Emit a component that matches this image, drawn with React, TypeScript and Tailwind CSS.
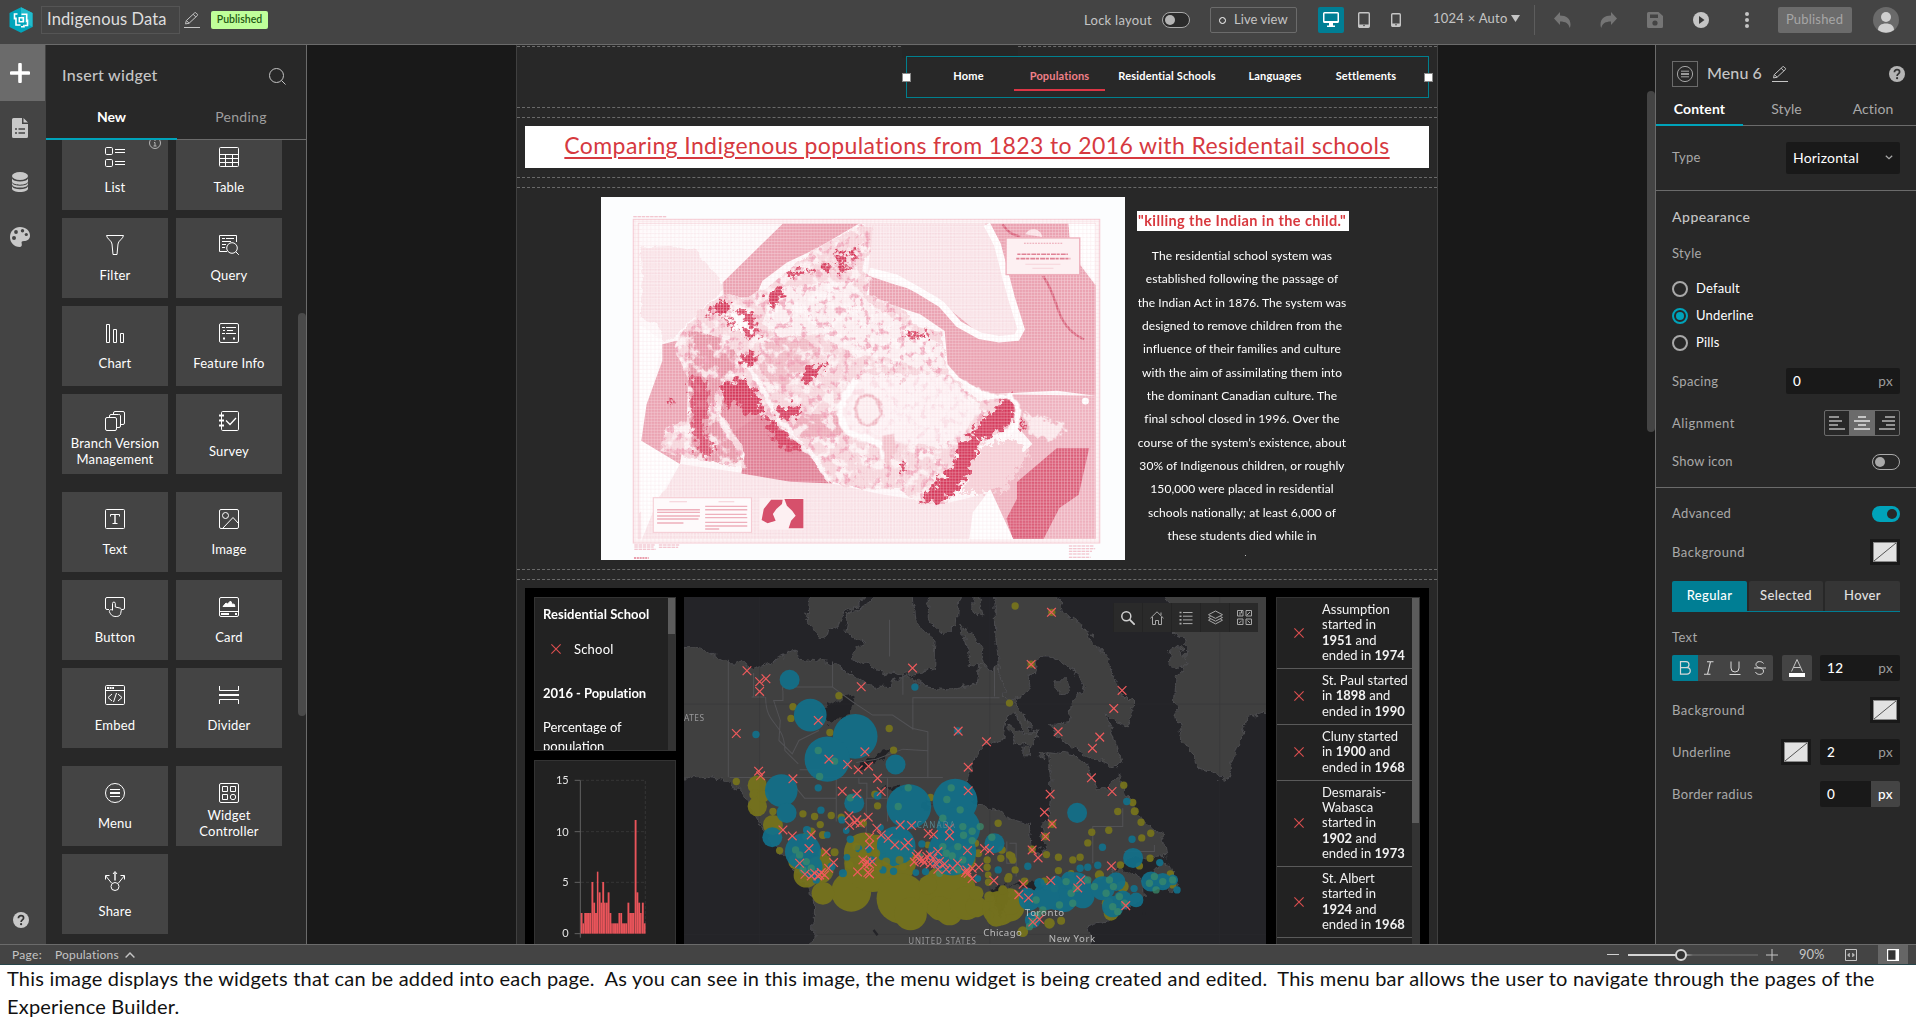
import React from 'react';
import type { ReactNode } from 'react';

/* ---------- shared icons ---------- */

const Ico = ({ children, s = 20, vb = 20, className = '' }: { children: ReactNode; s?: number; vb?: number; className?: string }) => (
  <svg width={s} height={s} viewBox={`0 0 ${vb} ${vb}`} fill="none" stroke="currentColor" strokeWidth={1} className={`shrink-0 ${className}`}>
    {children}
  </svg>
);

const Pencil = () => (
  <Ico s={16} vb={16}>
    <path d="M1.5 11.8 2.3 8.6 10.6 0.9a1 1 0 0 1 1.4 0l1.3 1.3a1 1 0 0 1 0 1.4L5 11.3l-3.5.6ZM9.2 2.3l2.6 2.6M2.5 8.6l2.4 2.5" />
    <path d="M0 15.5h16" />
  </Ico>
);

const Help = () => (
  <svg width="16" height="16" viewBox="0 0 16 16" className="shrink-0">
    <circle cx="8" cy="8" r="8" fill="currentColor" />
    <path d="M5.4 6.2c0-1.6 1.1-2.5 2.6-2.5s2.6.9 2.6 2.3c0 1.9-2.5 2-2.5 4" fill="none" stroke="#333" strokeWidth="1.7" />
    <circle cx="8.1" cy="12.2" r="1.1" fill="#333" />
  </svg>
);

const MenuIcon = ({ s = 20 }: { s?: number }) => (
  <Ico s={s}>
    <circle cx="10" cy="10" r="9.5" />
    <path d="M5 6.5h10M5 9.5h10M5 10.5h10M5 13.5h10" />
  </Ico>
);

const icons: Record<string, ReactNode> = {
  List: <Ico><rect x=".5" y=".5" width="7" height="7" rx="1.2" /><rect x=".5" y="12.5" width="7" height="7" rx="1.2" /><path d="M10 2.5h10M10 5.5h10M10 14.5h10M10 17.5h10" /></Ico>,
  Table: <Ico><rect x=".5" y=".5" width="19" height="19" rx="1" /><path d="M.5 7.5h19M.5 11.5h19M.5 15.5h19M6.5 7.5v12M13.5 7.5v12" /></Ico>,
  Filter: <Ico><path d="M1.5.5h17c-.3 3.200-5.500 5.500-5.500 8.500l-1 10.500H8L7 9C7 6 1.800 3.700 1.500.5Z" strokeLinejoin="round" /></Ico>,
  Query: <Ico><path d="M8 16.500H.5V.5h17V7M3 3.500h3M7 3.500h8M3 6.500h9M3 9.500h4M3 12.500h3" /><circle cx="13" cy="13" r="5.300" /><path d="m16.800 16.800 3 3" /></Ico>,
  Chart: <Ico><path d="M1.500 1.500h3v18h-3ZM8.500 6.500h3v13h-3ZM15.500 10.500h3v9h-3Z" /></Ico>,
  'Feature Info': <Ico><rect x=".5" y=".5" width="19" height="19" rx="1.500" /><path d="M3 4.500h3M7 4.500h10M4 7.500h2M8 7.500h6M3 10.500h3M7 10.500h10M4 15.500h2M5 14v3M14 15.500h2M15 14v3" /></Ico>,
  'Branch Version Management': <Ico><rect x=".5" y="6.500" width="11" height="13" rx="1.500" /><path d="M4.500 6V5A1.500 1.500 0 0 1 6 3.500h7.500A1.500 1.500 0 0 1 15.500 5v10a1.500 1.500 0 0 1-1.500 1.500h-2M8.500 3V2A1.500 1.500 0 0 1 10 .5h8A1.500 1.500 0 0 1 19.500 2v10a1.500 1.500 0 0 1-1.500 1.500h-2" /></Ico>,
  Survey: <Ico><rect x="2.500" y=".5" width="17" height="19" rx="1.200" /><path d="M0 4.500h5M0 9.500h5M0 14.500h5" strokeWidth="2" /><path d="m7 9.500 4 4 6-6.500" strokeWidth="1.300" /></Ico>,
  Text: <Ico><rect x=".5" y=".5" width="19" height="19" rx="1" /><path d="M5.500 7.500v-2h9v2M7.500 14.500h5" /><path d="M10 5.500v9" strokeWidth="2" opacity=".7" /></Ico>,
  Image: <Ico><rect x=".5" y=".5" width="19" height="19" rx="1.500" /><circle cx="6.500" cy="6.500" r="3" /><path d="M3.500 19.500 14 8.500l5.500 6" /></Ico>,
  Button: <Ico><path d="M4 12.500H2A1.500 1.500 0 0 1 .5 11V2A1.500 1.500 0 0 1 2 .5h16A1.500 1.500 0 0 1 19.500 2v9a1.500 1.500 0 0 1-1.500 1.500h-1.500" /><path d="M7.500 13V6.500a1.400 1.400 0 0 1 2.800 0V10l4.500 1c1.200.3 1.700 1 1.500 2.200l-.6 3.300c-.4 2-2 3-4.500 3-3.500 0-5-1-6.700-4.500C3.800 13.300 6 11.500 7.500 13.500" /></Ico>,
  Card: <Ico><rect x=".5" y=".5" width="19" height="19" rx="1.500" /><path d="M0 14.500h20" /><path d="m4 9.500 3-3.500 1.500 1L11.500 4l2 3.500L15 7l1 2.500Z" fill="currentColor" /><path d="M2 17h8" strokeWidth="2" /><path d="M16 17h2" strokeWidth="2" /></Ico>,
  Embed: <Ico><rect x=".5" y=".5" width="19" height="19" rx="1.200" /><path d="M.5 5.500h19" /><path d="M2 3h7" strokeWidth="2" strokeDasharray="2 .6" /><path d="m7 9-4 3.500L7 16M13 9l4 3.500-4 3.500M11.500 8 8.500 17" /></Ico>,
  Divider: <Ico><path d="M.5 1v4.500h19V1M.5 19v-4.500h19V19" /><path d="M0 10h20" strokeWidth="2" /></Ico>,
  Menu: <MenuIcon />,
  'Widget Controller': <Ico><rect x=".5" y=".5" width="19" height="19" rx="1.500" /><path d="M3.500 3.500h5v5h-5ZM11.500 3.500h5v5h-5ZM3.500 11.500h5v5h-5Z" /><circle cx="14" cy="14" r="2.700" /></Ico>,
  Share: <Ico><circle cx="10" cy="15.500" r="4" /><path d="M8 3l2-2.500L12 3M6.500 12 .8 5M.5 8.500v-4h4M13.500 12l5.700-7M19.500 8.500v-4h-4" /><path d="M10 9.500v-8" strokeWidth="2" opacity=".7" /></Ico>,
};

const Tile = ({ name }: { name: string }) => (
  <div className="flex h-20 flex-col items-center bg-[#444] pt-[17px] text-white">
    {icons[name]}
    <div className="mt-1 flex h-8 w-[93px] items-center justify-center text-center text-[13px] leading-4 tracking-[0.2px]">
      <span>{name}</span>
    </div>
  </div>
);

/* ---------- top bar ---------- */

const Header = () => (
  <header className="flex h-[45px] shrink-0 items-start border-b border-[#6b6b6b] bg-[#444] text-[#c5c5c5]">
    <svg width="24" height="26" viewBox="0 0 24 26" className="ml-[9px] mt-[7px] shrink-0">
      <path d="M12 .3 23.500 6v14L12 25.700.5 20V6Z" fill="#00a5bb" />
      <path d="M12 .3 23.500 6v14L12 13Z" fill="#22bccd" />
      <path d="M8.500 7H5.500v5.500M7 10.500v7.500h4.500M12 19.800h3v-2M12.500 7.200h5.200v7.800M18.500 12.500v6h-2.500M10.300 10.700h4v4h-4Z" fill="none" stroke="#fff" strokeWidth="1.600" />
    </svg>
    <div className="ml-2 mt-1.5 flex h-7 w-[139px] items-center border border-[#555] pl-[5px] pb-px text-[16.500px] tracking-[0.130px] text-[#dedede]">Indigenous Data</div>
    <div className="ml-1 mt-3"><Pencil /></div>
    <div className="ml-[11px] mt-[11px] flex h-[18px] w-[57px] items-center justify-center rounded-[2px] bg-[#bfff9a] pb-px text-[10.500px] font-semibold text-[#1f5a12]">Published</div>

    <div className="ml-[816px] mt-3 h-4 text-[13px] leading-4 tracking-[0.280px]">Lock layout</div>
    <div className="ml-[10px] mt-3 flex h-4 w-7 items-center rounded-full border border-[#a9a9a9] bg-[#2b2b2b] pl-[2px]"><div className="size-[10px] rounded-full bg-[#b5b5b5]" /></div>
    <div className="ml-5 mt-[7px] flex h-[26px] w-[87px] items-center rounded-[2px] border border-[#6b6b6b] pl-[8px] text-[13px] tracking-[0.080px]">
      <div className="mr-2 size-[7px] rounded-full border border-white" />Live view
    </div>
    <div className="ml-[21px] mt-[7px] flex size-[26px] items-center justify-center rounded-[2px] bg-[#007e94] text-white">
      <Ico s={16} vb={16}><rect x=".75" y=".75" width="14.500" height="9.500" rx=".8" strokeWidth="1.500" /><path d="M1 9h14v2H1ZM6 11h4v2.500h2V15H4v-1.500h2Z" fill="currentColor" stroke="none" /></Ico>
    </div>
    <svg width="14" height="16" viewBox="0 0 14 16" className="ml-[13px] mt-3 shrink-0"><rect x="1.700" y=".7" width="10.600" height="14.600" rx="1" fill="none" stroke="#c5c5c5" strokeWidth="1.400" /><path d="M2 12.500h10v2.500H2Z" fill="#c5c5c5" /><circle cx="7" cy="13.500" r=".8" fill="#444" /></svg>
    <svg width="10" height="14" viewBox="0 0 10 14" className="ml-5 mt-[13px] shrink-0"><rect x=".7" y=".7" width="8.600" height="12.600" rx="1" fill="none" stroke="#c5c5c5" strokeWidth="1.400" /><path d="M1 10.500h8V13H1Z" fill="#c5c5c5" /><circle cx="5" cy="11.700" r=".8" fill="#444" /></svg>
    <div className="ml-8 mt-[10px] h-4 text-[13px] leading-4 tracking-[0.250px]">1024 × Auto</div>
    <svg width="9" height="7" viewBox="0 0 9 7" className="ml-[3px] mt-[15px] shrink-0"><path d="M0 0h9L4.500 7Z" fill="#c5c5c5" /></svg>
    <div className="ml-[14px] mt-[5px] h-[30px] w-px bg-[#5d5d5d]" />
    <svg width="17" height="16" viewBox="0 0 17 16" className="ml-[19px] mt-3 shrink-0"><path d="M6 0v3.500c6 0 10.500 3 10.500 9 0 1.500-.3 2.500-.8 3.500-1-4.500-4-6.500-9.700-6.500V13L0 6.500Z" fill="#757575" /></svg>
    <svg width="17" height="16" viewBox="0 0 17 16" className="ml-[29px] mt-3 shrink-0"><path d="M11 0v3.500C5 3.500.5 6.500.5 12.500c0 1.500.3 2.500.8 3.500 1-4.500 4-6.500 9.700-6.500V13l6-6.500Z" fill="#757575" /></svg>
    <svg width="16" height="16" viewBox="0 0 16 16" className="ml-[30px] mt-3 shrink-0"><path d="M1.500 0h10L16 4v10.500a1.500 1.500 0 0 1-1.500 1.500h-13A1.500 1.500 0 0 1 0 14.500v-13A1.500 1.500 0 0 1 1.500 0ZM3 2.500v3.500h8V2.500Z" fill="#757575" fillRule="evenodd" /><circle cx="8" cy="11" r="2.600" fill="#444" /></svg>
    <svg width="16" height="16" viewBox="0 0 16 16" className="ml-[30px] mt-3 shrink-0"><circle cx="8" cy="8" r="8" fill="#c5c5c5" /><path d="m6 4 5.500 4L6 12Z" fill="#3a3a3a" /></svg>
    <svg width="4" height="16" viewBox="0 0 4 16" className="ml-[36px] mt-3 shrink-0" fill="#c5c5c5"><circle cx="2" cy="2" r="2" /><circle cx="2" cy="8" r="2" /><circle cx="2" cy="14" r="2" /></svg>
    <div className="ml-[29px] mt-[7px] flex h-[26px] w-[74px] items-center justify-center rounded-[2px] bg-[#6b6b6b] text-[13px] tracking-[0.200px] text-[#a6a6a6]">Published</div>
    <svg width="26" height="26" viewBox="0 0 26 26" className="ml-[21px] mt-[7px] shrink-0"><circle cx="13" cy="13" r="13" fill="#6a6a6a" /><circle cx="13" cy="10" r="5" fill="#cfcfcf" /><path d="M5 23c0-4.500 3.500-6.500 8-6.500s8 2 8 6.500a13 13 0 0 1-16 0Z" fill="#cfcfcf" /></svg>
  </header>
);

/* ---------- left rail and widget list ---------- */

const Rail = () => (
  <nav className="flex w-[46px] shrink-0 flex-col items-start bg-[#444] text-[#c8c8c8]">
    <div className="flex h-14 w-[45px] items-center justify-center bg-[#6b6b6b] pr-[5px]">
      <svg width="20" height="20" viewBox="0 0 20 20"><path d="M10 1.500v17M1.500 10h17" stroke="#fff" strokeWidth="3.600" strokeLinecap="round" /></svg>
    </div>
    <svg width="16" height="20" viewBox="0 0 16 20" className="ml-3 mt-[17px]"><path d="M1.500 0H10v6h6v12.500a1.500 1.500 0 0 1-1.500 1.500h-13A1.500 1.500 0 0 1 0 18.500v-17A1.500 1.500 0 0 1 1.500 0ZM11.500 0 16 4.500h-4.500Z" fill="currentColor" /><path d="M3 11h2M6.500 11H13M3 15h2M6.500 15H13" stroke="#444" strokeWidth="1.500" /></svg>
    <svg width="16" height="20" viewBox="0 0 16 20" className="ml-3 mt-[34px]" fill="currentColor"><ellipse cx="8" cy="4" rx="8" ry="4" /><path d="M0 6.500c1 2.200 4 3 8 3s7-.8 8-3v2.800c0 2-3.500 3.400-8 3.400S0 11.300 0 9.300ZM0 10.800c1 2.200 4 3 8 3s7-.8 8-3v1.400c0 2-3.500 3.400-8 3.400s-8-1.400-8-3.400ZM0 14.200c1 2.200 4 3 8 3s7-.8 8-3v2.300c0 2.100-3.500 3.500-8 3.500s-8-1.400-8-3.500Z" /></svg>
    <svg width="20" height="20" viewBox="0 0 20 20" className="ml-[10px] mt-[35px]"><path d="M10 0c6 0 10 3.800 10 8.500 0 4-3 5.500-6 5.500-2 0-2.800.8-2.300 2.500.5 2-.2 3.500-2 3.500C4 20 0 15.600 0 10S4.400 0 10 0Z" fill="currentColor" /><g fill="#444"><circle cx="6" cy="5" r="1.900" /><circle cx="12.500" cy="3.700" r="1.700" /><circle cx="16.300" cy="7.500" r="1.600" /><circle cx="4" cy="11" r="2" /></g></svg>
    <div className="ml-[13px] mt-auto mb-4"><Help /></div>
  </nav>
);

const WidgetPanel = () => (
  <aside className="relative flex w-[261px] shrink-0 flex-col overflow-hidden border-r border-[#6b6b6b] bg-[#282828]">
    <div className="flex h-[62px] shrink-0 items-center justify-between pl-4 pr-[20px] text-[#c5c5c5]">
      <span className="pb-[2px] text-[16px] font-medium tracking-[0.270px]">Insert widget</span>
      <Ico s={17} vb={17}><circle cx="7.500" cy="7.500" r="7" /><path d="m12.500 12.500 4 4" /></Ico>
    </div>
    <div className="flex h-[33px] shrink-0 text-center text-[14px] leading-5">
      <div className="w-[131px] border-b-2 border-[#00a3ba] font-bold text-white">New</div>
      <div className="flex-1 border-b border-[#6b6b6b] pr-px tracking-[0.300px] text-[#9e9e9e]">Pending</div>
    </div>
    <div className="min-h-0 flex-1 overflow-hidden px-4">
      <div className="-mt-[10px] grid grid-cols-[106px_106px] gap-2">
        <div className="relative"><Tile name="List" /><span className="absolute right-[7px] top-[7px] text-[#b5b5b5]"><Ico s={12} vb={12}><circle cx="6" cy="6" r="5.500" /><path d="M6 2.500v1.500M5 5.500h1v3.500M4.500 9h3" /></Ico></span></div>
        <Tile name="Table" /><Tile name="Filter" /><Tile name="Query" />
        <Tile name="Chart" /><Tile name="Feature Info" />
        <Tile name="Branch Version Management" /><Tile name="Survey" />
      </div>
      <div className="mt-[18px] grid grid-cols-[106px_106px] gap-2">
        <Tile name="Text" /><Tile name="Image" /><Tile name="Button" /><Tile name="Card" /><Tile name="Embed" /><Tile name="Divider" />
      </div>
      <div className="mt-[18px] grid grid-cols-[106px_106px] gap-2">
        <Tile name="Menu" /><Tile name="Widget Controller" /><Tile name="Share" />
      </div>
    </div>
    <div className="absolute right-0 top-[268px] h-[403px] w-2 rounded-full bg-[#4a4a4a]" />
  </aside>
);

/* ---------- historic geological map ---------- */

const landBody = 'M250 470 310 390 380 340 440 350 505 320 560 270 650 200 770 130 805 140 800 210 770 260 800 290 790 340 880 380 940 440 1000 450 1015 560 1060 620 1110 660 1200 645 1220 690 1190 740 1110 790 1080 870 1010 970 940 970 880 925 760 922 690 905 660 880 610 790 540 740 480 700 450 650 385 600 370 700 430 790 440 860 380 850 280 830 200 810 215 740 275 720 280 600 240 500Z';

const GeoMap = () => (
  <svg width="524" height="363" viewBox="30 48 1494 1090" preserveAspectRatio="none" className="block">
    <defs>
      <pattern id="mesh" width="8.600" height="9" patternUnits="userSpaceOnUse"><path d="M0 1h8.600M1 0v9" stroke="#fff" strokeWidth="1.500" opacity=".5" /></pattern>
      <pattern id="paleMesh" width="11.400" height="12" patternUnits="userSpaceOnUse"><path d="M0 1h11.400M1 0v12" stroke="#e8a5b4" strokeWidth="1.500" opacity=".3" /></pattern>
      <filter id="rough" x="-5%" y="-5%" width="110%" height="110%"><feTurbulence type="fractalNoise" baseFrequency=".045" numOctaves="3" seed="4" /><feDisplacementMap in="SourceGraphic" scale="18" xChannelSelector="R" yChannelSelector="G" /></filter>
      <filter id="rough2" x="-20%" y="-20%" width="140%" height="140%"><feTurbulence type="fractalNoise" baseFrequency=".06" numOctaves="4" seed="9" /><feDisplacementMap in="SourceGraphic" scale="50" xChannelSelector="R" yChannelSelector="G" /></filter>
      <filter id="speckDark" x="0" y="0" width="100%" height="100%"><feTurbulence type="fractalNoise" baseFrequency=".05 .045" numOctaves="5" seed="12" /><feColorMatrix values="0 0 0 0 .85  0 0 0 0 .3  0 0 0 0 .42  6 0 0 0 -3.300" /><feComposite in2="SourceGraphic" operator="in" /></filter>
      <filter id="speckWhite" x="0" y="0" width="100%" height="100%"><feTurbulence type="fractalNoise" baseFrequency=".03" numOctaves="5" seed="31" /><feColorMatrix values="0 0 0 0 1  0 0 0 0 .97  0 0 0 0 .97  0 6 0 0 -3" /><feComposite in2="SourceGraphic" operator="in" /></filter>
    </defs>
    <rect x="30" y="48" width="1494" height="1090" fill="#fcfdfe" />
    <rect x="122" y="115" width="1330" height="972" fill="#fdf5f6" stroke="#f5cbd3" strokeWidth="3" />
    <rect x="136" y="128" width="1304" height="946" fill="#fefafb" stroke="#f7d5db" strokeWidth="2" />
    {/* pale land of Alaska, Greenland and the United States */}
    <g fill="#fae6ea">
      <path d="M140 200 230 195 300 210 350 270 385 320 310 390 240 470 210 480 190 430 140 410 150 290Z" filter="url(#rough)" />
      <path d="M780 128H1125L1160 218 1175 298 1200 353 1230 443 1210 478 1140 470 1050 420 990 350 910 305 850 285 790 275 800 180Z" />
      <path d="M255 850 455 880 695 910 825 940 1005 970 1165 930 1205 1075H136V1000L216 925Z" />
    </g>
    <path d="m140 430 65 50-60 300 110 70-60 100-50 130Z" fill="#fff" />
    {/* seas */}
    <g fill="#eba3b2">
      <path d="M548 128H765L650 200 560 245 490 300 470 350 380 350 377 305Z" />
      <path d="M1125 128H1363L1367 188 1397 253 1440 313V645L1330 630 1130 640 1050 590 1018 550 1010 450 940 400 795 350V285L865 310 945 335 1035 395 1105 455 1165 475 1225 470 1230 443 1200 333 1175 218Z" />
      <path d="M1140 640 1440 645V1074H1205L1135 920 1200 850 1260 790Z" fill="#efb2bf" />
      <path d="M255 850 145 780 160 670 205 540 205 490 245 480 280 550 275 720Z" />
      <path d="M370 690 480 700 540 740 610 790 660 880 690 908 570 903 430 878 440 820 400 750Z" fill="#e07d93" />
      <path d="M360 600 450 640 485 700 400 760 365 690Z" fill="#e58b9e" />
    </g>
    <path d="M795 270 870 290 930 325 1000 370 1050 430 1110 465 1165 475 1215 470 1228 445 1200 350 1185 290 1160 190 1130 130" fill="none" stroke="#fff" strokeWidth="20" />
    <path d="M1330 802h92l-30 140-55 40-45 92h-88l-18-60 30-60 0-50Z" fill="#db5c77" />
    <path d={landBody} fill="#f7d6dc" filter="url(#rough)" />
    <g filter="url(#rough)">
      <path d="M520 320 740 300 800 370 910 440 1000 490 1010 560 950 570 850 530 740 520 660 460 540 470 490 430Z" fill="#fcf0f2" />
      <path d="M760 580H1010L1110 670 1080 740 1000 800 850 780 740 720Z" fill="#fdf2f4" />
      <path d="M280 450 370 470 425 530 390 590 350 650 370 740 440 840 380 850 290 825 280 600Z" fill="#e693a4" />
      <path d="M500 480 590 460 650 500 610 590 520 620 480 560Z" fill="#f0b8c3" />
      <path d="M570 760 600 700 700 700 720 750 690 790Z" fill="#eda9b7" />
    </g>
    <path d={landBody} filter="url(#speckWhite)" opacity=".8" />
    <path d={landBody} filter="url(#speckDark)" opacity=".75" />
    {/* dense geological units */}
    <g fill="#d5395a" filter="url(#rough2)">
      <path d="M375 610 435 590 475 640 490 690 450 710 420 660 385 690Z" />
      <path d="M495 700 550 750 610 800 560 810 520 770Z" />
      <path d="M520 680 595 675 600 700 560 718 525 705Z" />
      <path d="M285 590 335 600 340 680 320 740 350 790 340 830 305 810 290 740Z" opacity=".8" />
      <path d="M1195 640 1218 690 1180 745 1110 780 1085 870 1045 930 990 970 940 965 985 905 1035 855 1050 800 1100 740Z" />
      <path d="M600 610 612 555 675 550 660 570 625 605Z" />
      <path d="M370 400 410 440 450 470 485 460 460 400 420 385 400 420Z" opacity=".9" />
      <path d="M500 350 535 318 555 345 515 380Z" />
      <path d="M355 375 385 355 400 385 330 405ZM430 520 475 512 472 548 428 550Z" />
      <path d="M695 215 715 205 730 245 715 255ZM735 210 755 200 765 235 748 245ZM660 240 685 252 678 280 660 262ZM555 285 595 265 610 275 565 292ZM610 262 632 258 630 285ZM700 250 745 258 735 272 700 270Z" />
      <path d="M875 855 898 848 892 872ZM222 658 240 662 228 680ZM890 450 930 462 970 455 960 470 900 468ZM880 590 905 595 890 608ZM1215 710 1228 705 1232 745 1222 742Z" />
    </g>
    <path d="M450 560 500 640 520 690 590 780 640 830 680 900" stroke="#fff" strokeWidth="13" fill="none" opacity=".85" filter="url(#rough)" />
    <path d="M385 400 430 395 445 430 480 440 440 450 425 465 410 430Z" fill="#fff" filter="url(#rough2)" />
    {/* Hudson Bay */}
    <g filter="url(#rough)">
      <path d="M780 590c-60 50-85 130-60 155 40 30 100 25 130 45h60l150-20 50-80-70-80-60-25Z" fill="#fdf3f5" opacity=".75" />
      <path d="M760 595c-60 70-60 130-20 160 40 26 80 20 95 45l0 40" fill="none" stroke="#fff" strokeWidth="20" />
      <ellipse cx="792" cy="688" rx="36" ry="44" fill="#fdf0f2" stroke="#f0b8c3" strokeWidth="10" />
      <path d="M832 765 865 760 872 810 845 860 835 820Z" fill="#f3c2cb" />
    </g>
    <path d="m1020 575 60 40 60 32 60 0 20 30-5 60-70 60" fill="none" stroke="#fff" strokeWidth="13" filter="url(#rough)" />
    <path d="M1240 690 1355 738 1320 778 1250 758Z" fill="#fbe9ec" filter="url(#rough2)" />
    <path d="M1110 800 1200 770 1250 820 1180 930 1060 940 1080 870Z" fill="#f6cfd6" filter="url(#rough2)" />
    <path d="m1140 925 65 150h-125l10-80Z" fill="#fff" />
    <path d="M1290 285c30 40 35 90 55 130 15 30 40 50 62 60M1175 130c20 30 30 30 50 37" fill="none" stroke="#d8627b" strokeWidth="7" />
    <circle cx="1411" cy="661" r="10" fill="#fff" />
    <path d="M1240 160a25 25 0 0 1 48 8Z" fill="#fbe3e7" />
    <path d="M1363 128h77v180l-30-45-40-70Z" fill="#fff" opacity=".9" />
    <rect x="122" y="115" width="1330" height="972" fill="url(#paleMesh)" />
    <rect x="146" y="128" width="1294" height="946" fill="url(#mesh)" />
    {/* title block, notes and inset */}
    <rect x="1185" y="171" width="210" height="110" fill="#fdf0f2" stroke="#eeb1bd" strokeWidth="4" />
    <path d="M1236 187h110" stroke="#eaa2b1" strokeWidth="3" strokeDasharray="5 3" />
    <path d="M1217 220h144M1214 233h154" stroke="#e08295" strokeWidth="5" strokeDasharray="9 3 14 2" />
    <path d="M1240 250h100M1260 262h60" stroke="#f4c4cd" strokeWidth="2" />
    <rect x="179" y="951" width="280" height="104" fill="#fefafb" stroke="#f5cbd3" strokeWidth="3" />
    <g stroke="#eeb0bc" strokeWidth="4"><path d="M190 987h122M190 995h122M190 1006h122M190 1015h118M190 1027h75M327 977h120M327 987h120M327 1001h118M327 1011h120M327 1025h120M327 1036h120M327 1045h40" /><path d="M225 963h50M365 963h45" opacity=".6" strokeWidth="3" /></g>
    <rect x="482" y="952" width="126" height="95" fill="#fdf0f2" />
    <path d="M488 1018 494 985 515 957H548L546 970 530 985 520 1000 528 1020 505 1028ZM553 955H607V1043H565L572 1020 585 1005 575 990 560 975Z" fill="#d6506b" />
    <path d="M122 107h94M125 1093h60M125 1099h55M125 1106h62M195 1093h60M195 1100h55M1364 1096h70M1364 1104h75M1364 1112h66M1364 1120h60M1364 1130h62" stroke="#efb4c0" strokeWidth="3" strokeDasharray="10 2" />
    <path d="M124 1132h42" stroke="#ea9fae" strokeWidth="6" strokeDasharray="6 2" />
  </svg>
);

/* ---------- population map ---------- */

const blue = [[840,360,30],[902,466,49],[1037,530,67],[953,598,68],[1158,614,30],[815,692,49],[831,759,30],[788,832,30],[1198,740,67],[1337,724,67],[1347,805,65],[1328,875,72],[1034,730,30],[1160,858,58],[880,875,54],[905,920,34],[1455,850,30],[1703,759,30],[1871,894,30],[1216,382,11],[739,524,11],[926,684,11],[934,751,11],[953,825,10],[1345,513,11],[1104,708,12],[1237,852,11],[1000,940,12],[1022,838,11],[1010,812,10],[1047,866,11],[1012,892,10],[1076,868,11],[1086,900,11],[1118,890,11],[1152,908,11],[1152,934,11],[1190,880,11],[1120,930,11],[1248,935,11],[1466,930,11],[1405,956,10],[920,960,11],[966,920,12],[1219,938,10],[892,810,12],[997,780,11],[1555,919,11],[1712,925,11],[1735,922,11],[1765,916,11],[1779,862,11],[1868,838,11],[1852,725,11],[1951,908,11],[2003,990,11],[1874,986,11],[1925,965,30],[1960,965,26],[1680,960,25],[1700,985,48],[1640,1010,40],[1665,1020,36],[1720,1010,35],[1780,985,36],[1820,965,28],[1810,1040,32],[1840,1020,28],[1880,1020,22],[1610,1010,40],[1560,1020,32],[1570,1080,24],[1590,970,16],[1640,965,18],[1552,1005,22],[1990,960,16],[1113,803,10]];
const olive = [[850,441,11],[844,476,11],[988,408,11],[961,518,11],[1139,506,11],[1152,571,11],[680,665,11],[743,676,29],[735,704,16],[743,740,29],[760,710,18],[790,795,30],[790,755,11],[880,762,11],[915,770,11],[965,767,11],[932,794,11],[995,772,11],[1104,738,11],[1096,703,11],[1263,713,11],[1466,790,11],[810,872,11],[930,930,42],[890,945,38],[1025,995,60],[1090,910,86],[1150,905,70],[1176,1016,75],[1203,1062,49],[1065,880,62],[940,1000,34],[1315,1000,86],[1290,1045,36],[1320,1056,40],[1370,1030,50],[1400,1040,32],[1470,1045,52],[1500,1040,45],[1500,1025,40],[1460,1070,30],[1350,900,48],[1255,975,28],[1400,1000,22],[1440,1010,16],[1406,880,12],[1398,850,11],[1433,900,11],[1433,922,11],[1478,870,11],[1474,895,11],[1500,885,11],[1510,900,11],[1497,955,11],[1517,930,11],[1436,945,10],[1437,967,11],[1495,957,11],[1476,870,11],[1506,890,12],[1690,900,11],[1712,892,11],[1647,892,11],[1647,932,11],[1735,849,11],[1747,817,11],[1798,811,11],[1825,755,11],[1843,676,11],[1870,728,11],[1876,754,12],[1895,787,11],[1924,820,11],[1897,834,11],[1922,895,11],[1890,918,11],[1833,915,11],[1983,942,11],[1990,975,11],[1611,884,11],[1517,139,11],[1500,430,11],[1628,793,11],[1608,830,11],[1568,868,11],[1627,158,11],[1565,313,11],[1466,1040,11],[1655,1082,12],[1620,1090,16],[1540,1115,16],[1605,965,12],[1635,985,12],[1545,965,12],[1770,945,14],[1690,960,12],[1685,940,10],[975,877,12],[950,900,14],[940,880,14],[905,815,12],[940,825,12],[890,830,12],[860,905,24],[1255,855,10],[1060,790,12],[1030,880,14],[1480,990,14],[1440,1065,14],[1498,950,11],[1805,1060,22],[1795,1030,18],[1840,980,18]];
const mixed = [[926,572],[975,604],[930,650],[1196,684],[1166,740],[1325,684],[1312,719],[1352,750],[1300,775],[1360,800],[1388,814],[1412,800],[1362,826],[1388,842],[1310,880],[1328,888],[1345,860],[1300,860],[1022,714],[1447,832],[870,885],[890,905],[905,925],[880,930],[858,870],[1790,1000],[1812,980],[1830,1010],[1810,1040],[1845,1030],[1800,960],[1825,1055],[1920,970],[1935,950],[1960,965],[1940,990],[1580,1020],[1570,1085],[1585,1065],[1670,965],[1700,985],[1685,1000],[1650,1035],[1690,1030],[1735,960],[1755,980],[1560,1100],[1600,1050],[1360,900],[1345,930],[1290,940],[1230,890],[1990,960]];
const crosses = [[712,333],[769,357],[750,366],[750,395],[1055,381],[1209,325],[926,482],[680,521],[958,598],[1066,576],[1014,614],[1046,630],[1077,619],[1104,655],[1115,695],[747,634],[753,648],[850,657],[998,694],[1042,702],[1376,622],[1376,693],[1346,514],[1431,546],[1018,768],[1042,780],[1052,790],[1076,772],[1020,796],[1036,788],[820,810],[848,828],[905,825],[898,866],[950,876],[870,910],[886,943],[915,940],[925,948],[935,938],[945,945],[957,925],[972,908],[930,945],[905,948],[1080,832],[1080,855],[1102,805],[1115,825],[1136,835],[1156,855],[1172,795],[1206,797],[1196,848],[1186,858],[1060,900],[1072,906],[1080,912],[1066,915],[1088,905],[1044,936],[1075,938],[1080,942],[1256,820],[1272,824],[1320,805],[1320,828],[1220,890],[1230,900],[1244,908],[1252,890],[1262,885],[1270,895],[1285,875],[1262,912],[1278,910],[1214,906],[1290,905],[1305,912],[1285,928],[1240,900],[1330,925],[1344,910],[1374,872],[1372,930],[1368,938],[1388,925],[1408,922],[1388,956],[1425,866],[1440,872],[1310,928],[1225,882],[1453,962],[1626,158],[1565,314],[1838,392],[1813,446],[1646,516],[1771,532],[1749,565],[1746,654],[1808,695],[1622,703],[1605,757],[1628,792],[1608,830],[1568,870],[1586,894],[1806,918],[1714,960],[1705,984],[1624,962],[1541,973],[1528,1004],[1557,1014],[1849,1037],[1570,1086],[1590,1078],[1376,940]];

const PopulationMap = () => (
  <svg width="582" height="347" viewBox="523 112 1747 1040" preserveAspectRatio="none" className="block" fontFamily="'Noto Sans',sans-serif">
    <defs>
      <filter id="coast" x="-2%" y="-2%" width="104%" height="104%"><feTurbulence type="fractalNoise" baseFrequency=".035" numOctaves="4" seed="7" /><feDisplacementMap in="SourceGraphic" scale="34" xChannelSelector="R" yChannelSelector="G" /></filter>
      <clipPath id="mapClip"><rect x="523" y="112" width="1747" height="1040" /></clipPath>
    </defs>
    <g clipPath="url(#mapClip)">
      <rect x="523" y="112" width="1747" height="1040" fill="#242428" />
      <g filter="url(#coast)">
        <g fill="#3f3f41" stroke="#57575a" strokeWidth="2">
          <path d="M490 258 580 272 650 305 700 308 735 330 790 305 855 268 885 300 965 308 1030 345 1075 378 1130 380 1200 350 1250 385 1320 390 1400 375 1410 300 1440 340 1480 300 1500 400 1560 500 1590 540 1550 540 1520 460 1490 470 1480 540 1420 560 1395 590 1375 650 1370 700 1400 735 1440 740 1500 775 1560 795 1565 860 1590 890 1605 860 1590 800 1620 760 1625 640 1615 575 1690 585 1740 630 1760 690 1800 690 1830 640 1850 700 1895 780 1960 830 1970 890 1900 895 1860 900 1810 940 1860 930 1900 960 1905 1010 1820 1070 1790 1085 1750 1090 1735 1115 1760 1190 900 1190 912 1120 915 1040 900 985 860 940 840 900 815 885 770 820 730 750 690 690 650 665 600 650 490 652Z" />
          <path d="M905 100h165l-30 42-35 14-22 48-48 36-45-50Z" />
          <path d="M1085 130 1110 100h100l10 90 60 45-5 95-90 18-80-14-80-44 40-40-60-30 10-60Z" />
          <path d="M1260 100h90l-10 90-40 38-45-40ZM1360 190l60 80 10 50-50-10ZM1390 100h20l10 70-30-10Z" />
          <path d="M1455 100h80l110-5 10 60 60 40 80 110 25 60 20 40 40 40-30 60-60-45 15 50 30 90-15 25-90-40-80-50-25-40 55-10 5-50 40-50-30-50-50-40-60 0-30 90-20 40-50-20-10-60-15-90Z" />
          <path d="M1965 100h330v350l-80 20-65 190-80-35-60-105-15-90 5-80 25-20 5-90-40-20-10-70Z" />
          <path d="M1930 930l30-30 20 30 30 40-20 25-40-15-30 0Z" />
          <path d="M1640 360l30 0 10 30-25 20-20-25ZM1495 490l40 30 50 0-20 40-50-10ZM1540 565l20 0 0 20-20 0ZM1595 580l14 0-4 20ZM1985 260l30 5 15 50-30 20-20-30Z" />
        </g>
        <g fill="#242428"><path d="m930 450 60-30 50-10-20 50-60 30ZM1050 610l80-45 30 0-70 50-40 20ZM1110 690l60-15 30 5-60 10ZM1500 975l80-10 40 20-60 0ZM1440 990l50-20 10 40-20 60ZM1240 730l12-20 10 30-14 20ZM1830 920l50 10-30 10Z" /></g>
      </g>
      <g fill="none" stroke="#525255" strokeWidth="3">
        <path d="M656 300v352M732 340v72M768 412c0 90 55 70 58 160l40 40M726 412h40M660 653h640M969 305v77h-150v10M969 382l60 44 60 40h60l60 40M1210 510V414h260M1255 515v140M1210 506l45 10M1255 573l-75-5-80 30-60 10M820 392v30h-28l20 60-4 60 40 40 20-40 60-30M980 655v130M980 715h-95l-25-30M1070 715v120M1048 655v15h24v45h62v-60M1134 655v130M1520 950v-100h-20M1492 845v65h25M1780 800h-30v110M1810 910v60M1780 800h60v-55M1845 875h90v-20M1140 290v-110M1180 345v60M1455 320v90M870 630h60" />
      </g>
      <g stroke="#2f2f33" strokeWidth="1.500"><path d="M523 433h1747M750 112v1040M1441 112v1040M2131 112v1040M523 1123h1747" opacity=".6" /></g>
      <path d="m1092 1110 12 16M1900 1060h8" stroke="#242428" strokeWidth="7" />
      <g fill="#77741c" opacity=".93">{olive.map(([x, y, r], i) => <circle key={i} cx={x} cy={y} r={r} />)}</g>
      <g fill="#12708a" opacity=".93">{blue.map(([x, y, r], i) => <circle key={i} cx={x} cy={y} r={r} />)}</g>
      <g fill="#3a8a6a" opacity=".75">{mixed.map(([x, y], i) => <circle key={i} cx={x} cy={y} r="11" />)}</g>
      <g fill="#77741c" opacity=".8">{[[1040,860],[1100,880],[1130,905],[1060,880],[1105,920],[1180,920],[1020,915],[1170,900]].map(([x, y], i) => <circle key={i} cx={x} cy={y} r="12" />)}</g>
      <g fill="none" stroke="#ef5a5c" strokeWidth="3.600">{crosses.map(([x, y], i) => <path key={i} d={`M${x - 13} ${y - 13}l26 26m0-26l-26 26`} />)}</g>
      <g fill="#98989a">
        <text x="523" y="484" textLength="60" fontSize="25">ATES</text>
        <text x="1222" y="805" textLength="114" fill="#56868f" fontSize="24">CANADA</text>
        <text x="1196" y="1151" textLength="203" fontSize="24">UNITED STATES</text>
        <g fill="#bcbcbc" fontSize="29"><text x="1421" y="1129" textLength="116">Chicago</text><text x="1546" y="1067" textLength="118">Toronto</text><text x="1618" y="1147" textLength="139">New York</text></g>
      </g>
    </g>
  </svg>
);

const MapTools = () => (
  <div className="absolute right-2 top-[6px] flex h-[29px] bg-[#2a2a2a] text-[#a8a8a8]">
    {[
      <Ico key="a" s={14} vb={14} className="text-[#d0d0d0]"><circle cx="5.300" cy="5.300" r="4.500" strokeWidth="1.500" /><path d="m8.700 8.700 5 5" strokeWidth="1.800" /></Ico>,
      <Ico key="b" s={14} vb={14}><path d="M.5 7.200 7 .8l6.500 6.400M2.500 6v7.500h3v-4h3v4h3V6M11 4V1.500" /></Ico>,
      <Ico key="c" s={14} vb={14}><path d="M4 1.500h9.500M4 5.200h9.500M4 8.900h9.500M4 12.600h9.500" /><path d="M.5 1.500h2M.5 5.200h2M.5 8.900h2M.5 12.600h2" strokeWidth="1.600" /></Ico>,
      <Ico key="d" s={15} vb={15}><path d="m7.500 1 7 3.700-7 3.700-7-3.700ZM2.500 6.500l-2 1 7 3.700 7-3.700-2-1M2.500 9.200l-2 1 7 3.700 7-3.700-2-1" /></Ico>,
      <Ico key="e" s={15} vb={15}><path d="M.5.5h5.500v5.500H.5ZM9 .5h5.500v5.500H9ZM.5 9h5.500v5.500H.5ZM9 9h5.500v5.500H9ZM2 3h2.500V1M10 5l3-3M2 13l2.500-2M10.500 10.500l2.500 2.500M3 5.500V4" /></Ico>,
    ].map((icon, i) => (
      <div key={i} className="flex w-[29px] items-center justify-center border-l border-[#242424]">{icon}</div>
    ))}
  </div>
);

/* ---------- data panels ---------- */

const Cross = () => <svg width="10" height="10" viewBox="0 0 10 10" className="shrink-0"><path d="m.4.4 9.200 9.200m0-9.200L.4 9.600" stroke="#dd4f50" strokeWidth="1.100" /></svg>;

const Legend = () => (
  <div className="flex h-[154px] overflow-hidden border border-[#333] bg-[#222] text-[13px] text-white">
    <div className="w-[133px] shrink-0 overflow-hidden pl-2">
      <div className="mt-[7px] leading-[18px] font-bold tracking-[0.050px] whitespace-nowrap">Residential School</div>
      <div className="mt-[17px] flex items-center pl-2 leading-[18px] tracking-[0.200px]"><Cross /><span className="ml-[13px]">School</span></div>
      <div className="mt-[26px] leading-[18px] font-bold tracking-[-0.050px] whitespace-nowrap">2016 - Population</div>
      <div className="mt-4 leading-[19px]">Percentage of<br />population</div>
    </div>
    <div className="w-[7px] bg-[#333]"><div className="h-9 w-[7px] bg-[#5c5c5c]" /></div>
  </div>
);

const bars = [2, 1, 2, 2, 2, 2, 5, 3, 2, 6, 4, 3, 5, 3, 3, 4, 2, 1, 1, 1, 1, 2, 2, 1, 1, 1, 3, 2, 2, 2, 11, 4, 3, 2, 3, 1];

const Histogram = () => (
  <div className="mt-[9px] min-h-0 flex-1 overflow-hidden border border-b-0 border-[#333] bg-[#222]">
    <svg width="140" height="184" viewBox="76 603 420 552" className="block" fontFamily="Lato,sans-serif" fontSize="33">
      <g fill="#e6e6e6" textAnchor="end"><text x="177" y="673">15</text><text x="177" y="829">10</text><text x="177" y="979">5</text><text x="177" y="1132">0</text></g>
      <path d="M214 661h193v459M214 815h193M214 967h193" fill="none" stroke="#3a3a3a" strokeWidth="2.500" strokeDasharray="9 6" />
      <path d="M212 661v472M195 661h17M195 815h17M195 967h17M195 1121h17" stroke="#626262" strokeWidth="3" />
      <g fill="#e9545a">{bars.map((v, i) => <rect key={i} x={213 + i * 5.4} y={1121 - v * 31} width={i % 4 === 1 ? 4.6 : 5.6} height={v * 31} />)}</g>
    </svg>
  </div>
);

const schools: [string, ReactNode][] = [
  ['h-[71px]', <>Assumption<br />started in<br /><b>1951</b> and<br />ended in <b>1974</b></>],
  ['h-14', <>St. Paul started<br />in <b>1898</b> and<br />ended in <b>1990</b></>],
  ['h-14', <>Cluny started<br />in <b>1900</b> and<br />ended in <b>1968</b></>],
  ['h-[86px]', <>Desmarais-<br />Wabasca<br />started in<br /><b>1902</b> and<br />ended in <b>1973</b></>],
  ['h-[71px]', <>St. Albert<br />started in<br /><b>1924</b> and<br />ended in <b>1968</b></>],
];

const SchoolList = () => (
  <div className="ml-[10px] flex w-[144px] shrink-0 overflow-hidden border border-b-0 border-[#333] bg-[#222] text-[13px] leading-[15.200px] text-[#f2f2f2]">
    <div className="flex-1">
      {schools.map(([h, text], i) => (
        <div key={i} className={`flex items-center border-b border-[#5a5a5a] pb-px pl-[17px] ${h}`}>
          <Cross />
          <div className="ml-[18px] whitespace-nowrap">{text}</div>
        </div>
      ))}
    </div>
    <div className="w-[7px] shrink-0 bg-[#333]"><div className="h-[225px] bg-[#5c5c5c]" /></div>
  </div>
);

/* ---------- page canvas ---------- */

const navItems: [string, string][] = [
  ['Home', 'w-[91px]'], ['Populations', 'w-[91px]'], ['Residential Schools', 'w-[124px]'], ['Languages', 'w-[92px]'], ['Settlements', 'w-[90px]'],
];

const paragraph = [
  'The residential school system was', 'established following the passage of', 'the Indian Act in 1876. The system was', 'designed to remove children from the',
  'influence of their families and culture', 'with the aim of assimilating them into', 'the dominant Canadian culture. The', 'final school closed in 1996. Over the',
  'course of the system’s existence, about', '30% of Indigenous children, or roughly', '150,000 were placed in residential', 'schools nationally; at least 6,000 of', 'these students died while in',
];

const Canvas = () => (
  <main className="relative flex min-w-0 flex-1 justify-start overflow-hidden bg-[#191919] pl-[209px]">
    <div className="flex w-[922px] shrink-0 flex-col border-x border-[#404040] bg-[#282828] pt-px">
      <div className="relative flex h-[62px] shrink-0 justify-end border-y border-dashed border-[#6a6a6a] pr-2 pt-[9px]">
        <div className="absolute left-[385px] -top-px h-3 w-[116px] bg-[#262626]" />
        <div className="relative flex h-[42px] w-[523px] border border-[#00808f] pl-4 pt-[5px]">
          {navItems.map(([label, w]) => (
            <div key={label} className={`flex h-[29px] items-center justify-center text-[11px] font-bold tracking-[0.170px] whitespace-nowrap ${w} ${label === 'Populations' ? 'border-b-2 border-[#dc3545] pt-[2px] text-[#f08088]' : 'text-white'}`}>{label}</div>
          ))}
          <div className="absolute -left-[5px] top-4 size-[9px] border border-[#8a8a8a] bg-white" />
          <div className="absolute -right-[5px] top-4 size-[9px] border border-[#8a8a8a] bg-white" />
        </div>
      </div>
      <div className="mt-[9px] flex h-[61px] shrink-0 items-start border-y border-dashed border-[#6a6a6a] px-2 pt-2">
        <div className="flex h-[42px] w-full items-center justify-center bg-white pb-[4px] text-[23px] tracking-[0.390px] whitespace-nowrap text-[#d6393f]">
          <span className="underline decoration-2 underline-offset-[3px]">Comparing Indigenous populations from 1823 to 2016 with Residentail schools</span>
        </div>
      </div>
      <div className="mt-[9px] flex h-[383px] shrink-0 border-y border-dashed border-[#6a6a6a] pl-[84px] pt-[9px]">
        <div className="h-[363px] w-[524px] shrink-0"><GeoMap /></div>
        <div className="ml-[12px] flex w-[212px] flex-col items-center">
          <div className="mt-[14px] h-5 w-[212px] bg-white pl-px text-left text-[14.500px] leading-[20px] font-bold tracking-[0.410px] whitespace-nowrap text-[#d8383e]">"killing the Indian in the child."</div>
          <div className="mt-[13px] mr-[2px] text-center text-[12px] leading-[23.330px] tracking-[0.080px] text-white">
            {paragraph.map((line) => <div key={line} className="whitespace-nowrap">{line}</div>)}
          </div>
          <div className="ml-1 mt-[8px] size-px bg-[#bbb]" />
        </div>
      </div>
      <div className="mt-[9px] min-h-0 flex-1 border-t border-dashed border-[#6a6a6a] px-2 pt-2">
        <div className="flex h-full bg-black pl-[9px] pt-[9px]">
          <div className="flex w-[142px] shrink-0 flex-col"><Legend /><Histogram /></div>
          <div className="relative ml-2 w-[582px] shrink-0 overflow-hidden"><PopulationMap /><MapTools /></div>
          <SchoolList />
        </div>
      </div>
    </div>
    <div className="absolute right-0 top-[46px] h-[341px] w-2 rounded-full bg-[#444]" />
  </main>
);

/* ---------- settings panel ---------- */

const Swatch = ({ className = '' }: { className?: string }) => (
  <div className={`flex h-[26px] w-[30px] shrink-0 items-center justify-center bg-[#191919] ${className}`}>
    <svg width="24" height="20" viewBox="0 0 24 20"><rect x=".5" y=".5" width="23" height="19" fill="#e2e2e2" stroke="#8a8a8a" /><path d="M1 19 23 1" stroke="#555" /></svg>
  </div>
);

const Field = ({ value, w }: { value: string; w: string }) => (
  <div className={`flex h-[26px] items-center justify-between rounded-[2px] bg-[#191919] pl-[7px] pr-[7px] text-[13.500px] font-medium text-white ${w}`}>
    {value}<span className="font-normal text-[#9e9e9e]">px</span>
  </div>
);

const Radio = ({ label, on }: { label: string; on?: boolean }) => (
  <div className="flex h-[27px] items-center text-[13px] tracking-[0.200px] text-white">
    <div className={`mr-2 flex size-4 items-center justify-center rounded-full border-2 ${on ? 'border-[#00a3ba]' : 'border-[#a9a9a9]'}`}>{on && <div className="size-2 rounded-full bg-[#00a3ba]" />}</div>
    {label}
  </div>
);

const AlignIcon = ({ d }: { d: string }) => <svg width="16" height="14" viewBox="0 0 16 14"><path d={d} stroke="currentColor" strokeWidth="1.500" /></svg>;

const Settings = () => (
  <aside className="flex w-[261px] shrink-0 flex-col border-l border-[#6b6b6b] bg-[#282828] text-[13px] tracking-[0.350px] text-[#a9a9a9]">
    <div className="flex h-[58px] shrink-0 items-center pl-4 pr-[11px] text-[#c5c5c5]">
      <div className="flex size-[26px] items-center justify-center border border-[#6b6b6b]"><MenuIcon s={16} /></div>
      <span className="ml-[9px] mr-[10px] pb-[2px] text-[16px] font-medium tracking-[0.100px]">Menu 6</span>
      <Pencil />
      <span className="ml-auto text-[#b5b5b5]"><Help /></span>
    </div>
    <div className="flex h-[23px] shrink-0 text-center text-[14px] leading-[12px] tracking-[0.100px]">
      <div className="w-[87px] border-b-2 border-[#00a3ba] font-bold text-white">Content</div>
      <div className="w-[87px] border-b border-[#6b6b6b]">Style</div>
      <div className="flex-1 border-b border-[#6b6b6b]">Action</div>
    </div>
    <div className="flex h-[65px] shrink-0 items-center justify-between border-b border-[#6b6b6b] px-4">
      Type
      <div className="flex h-8 w-[114px] items-center justify-between rounded-[2px] bg-[#191919] pb-px pl-[7px] pr-[7px] text-[14px] tracking-[0.200px] text-white">Horizontal
        <svg width="8" height="5" viewBox="0 0 8 5" fill="none" stroke="#a9a9a9" strokeWidth="1.200"><path d="m.8.8 3.200 3 3.200-3" /></svg>
      </div>
    </div>
    <div className="flex flex-col px-4">
      <div className="flex h-[52px] items-center pb-[2px] text-[14px] font-medium tracking-[0.500px] text-[#c5c5c5]">Appearance</div>
      <div className="mb-[10px] h-[22px] leading-[21px]">Style</div>
      <Radio label="Default" /><Radio label="Underline" on /><Radio label="Pills" />
      <div className="mt-3 flex items-center justify-between"><span className="pt-[2px]">Spacing</span><Field value="0" w="w-[114px]" /></div>
      <div className="mt-4 flex h-[26px] items-center justify-between tracking-[0.500px]"><span className="pt-[2px]">Alignment</span>
        <div className="flex h-[26px] w-[76px] rounded-[2px] border border-[#6b6b6b] text-[#b5b5b5]">
          <div className="flex flex-1 items-center justify-center"><AlignIcon d="M0 1h10M0 5h13M0 9h9M0 13h16" /></div>
          <div className="flex w-[26px] items-center justify-center bg-[#6b6b6b] text-[#e5e5e5]"><AlignIcon d="M4 1h8M0 5h16M4 9h8M0 13h16" /></div>
          <div className="flex flex-1 items-center justify-center"><AlignIcon d="M6 1h10M3 5h13M7 9h9M0 13h16" /></div>
        </div>
      </div>
      <div className="mt-[18px] flex h-4 items-center justify-between tracking-[0.240px]">Show icon
        <div className="flex h-4 w-7 items-center rounded-full border border-[#a9a9a9] pl-[2px]"><div className="size-[10px] rounded-full bg-[#a9a9a9]" /></div>
      </div>
    </div>
    <div className="mt-[17px] h-px shrink-0 bg-[#6b6b6b]" />
    <div className="flex flex-col px-4">
      <div className="mt-[18px] flex h-4 items-center justify-between">Advanced
        <div className="flex h-4 w-7 items-center justify-end rounded-full bg-[#00a3ba] pr-[3px]"><div className="size-[10px] rounded-full bg-[#282828]" /></div>
      </div>
      <div className="mt-[17px] flex h-[26px] items-center justify-between tracking-[0.500px]"><span className="pt-[2px]">Background</span><Swatch /></div>
      <div className="mt-4 flex h-[31px] gap-[2px] border-b border-[#007e94] text-center leading-[29px] font-medium text-[#e0e0e0]">
        <div className="w-[75px] rounded-t-[2px] bg-[#007e94] text-white">Regular</div>
        <div className="w-[74px] rounded-t-[2px] bg-[#353535]">Selected</div>
        <div className="w-[75px] rounded-t-[2px] bg-[#353535]">Hover</div>
      </div>
      <div className="mt-[18px] h-4 leading-[15px]">Text</div>
      <div className="mt-[9px] flex h-[26px] items-center">
        <div className="flex h-[26px] w-[101px] overflow-hidden rounded-[2px] bg-[#444] text-[#d8d8d8]">
          <div className="flex w-[26px] items-center justify-center bg-[#007e94]"><Ico s={14} vb={14}><path d="M2.500.7h5.500a3 3 0 0 1 0 6H2.500Zm0 6h6.500a3.200 3.200 0 0 1 0 6.500H2.500Z" strokeWidth="1.200" /></Ico></div>
          <div className="flex w-[25px] items-center justify-center pr-[3px]"><Ico s={14} vb={14}><path d="M5 .7h6.500M2 13.300h6.500M8.500.7l-3 12.600" strokeWidth="1.100" /></Ico></div>
          <div className="flex w-[25px] items-center justify-center pr-[2px]"><Ico s={14} vb={14}><path d="M3 .5v6.500a4 4 0 0 0 8 0V.5M1.500 13.500h11" /></Ico></div>
          <div className="flex w-[25px] items-center justify-center pr-px"><Ico s={14} vb={14}><path d="M10.500 2.500C9.500 1 8 .6 6.500.6c-2.200 0-3.500 1.200-3.500 2.900 0 1.800 1.500 2.700 3.500 3.200 2.500.6 4 1.500 4 3.400 0 2-1.600 3.300-3.800 3.300-2 0-3.500-.8-4.200-2.300M1 7h12" /></Ico></div>
        </div>
        <div className="ml-[9px] flex h-[26px] w-[30px] flex-col items-center rounded-[2px] bg-[#444] pt-1 text-[#c5c5c5]">
          <svg width="14" height="13" viewBox="0 0 14 13" fill="none" stroke="currentColor"><path d="M1.500 12.500 7 .5l5.500 12M3.500 8.500h7" /></svg>
          <div className="mt-px h-1 w-4 bg-white" />
        </div>
        <div className="ml-auto"><Field value="12" w="w-[80px]" /></div>
      </div>
      <div className="mt-4 flex h-[26px] items-center justify-between tracking-[0.500px]"><span className="pt-[2px]">Background</span><Swatch /></div>
      <div className="mt-4 flex h-[26px] items-center"><span className="pt-[2px]">Underline</span><Swatch className="ml-auto mr-[9px]" /><Field value="2" w="w-[80px]" /></div>
      <div className="mt-4 flex h-[26px] items-center justify-between"><span className="pt-[2px]">Border radius</span>
        <div className="flex h-[26px] w-[80px] items-center justify-between overflow-hidden rounded-[2px] bg-[#191919] pl-[7px] text-[13.500px] font-medium text-white">0
          <div className="flex h-full w-[29px] items-center justify-center bg-[#444]">px</div>
        </div>
      </div>
    </div>
  </aside>
);

/* ---------- footer ---------- */

const Footer = () => (
  <footer className="flex h-[21px] shrink-0 items-center border-y border-t-[#6b6b6b] border-b-[#28454a] bg-[#444] text-[#c5c5c5]">
    <span className="ml-3 text-[12px] tracking-[0.300px]">Page:</span>
    <span className="ml-[13px] text-[12px] tracking-[0.190px]">Populations</span>
    <svg width="10" height="6" viewBox="0 0 10 6" className="ml-[6px]" fill="none" stroke="currentColor" strokeWidth="1.400"><path d="m.6 5.500 4.400-4.500 4.400 4.500" /></svg>
    <div className="ml-auto h-px w-3 bg-[#d0d0d0]" />
    <div className="relative ml-[9px] h-[2px] w-[130px] bg-linear-to-r from-[#d5d5d5] from-40% to-[#5a5a5a] to-50%">
      <div className="absolute left-[47px] -top-[5px] size-3 rounded-full border-2 border-[#d5d5d5] bg-[#333]" />
    </div>
    <svg width="12" height="12" viewBox="0 0 12 12" className="ml-2" stroke="currentColor"><path d="M0 6h12M6 0v12" /></svg>
    <span className="ml-[21px] w-[26px] text-[13px]">90%</span>
    <svg width="12" height="12" viewBox="0 0 12 12" className="ml-5" fill="none" stroke="currentColor"><path d="M.5.500h11v11H.5Z" /><path d="M4.500 4 2.500 6l2 2ZM7.500 4l2 2-2 2Z" fill="currentColor" strokeWidth=".5" /></svg>
    <div className="ml-[21px] mr-2 flex h-full w-[30px] items-center justify-center bg-[#666]">
      <svg width="12" height="12" viewBox="0 0 12 12"><path d="M.6.6h10.800v10.800H.6Z" fill="#333" stroke="#fff" strokeWidth="1.200" /><path d="M8.500 0H12v12H8.500Z" fill="#fff" /></svg>
    </div>
  </footer>
);

export default function App() {
  return (
    <div className="h-[1023px] w-[1918px] overflow-hidden bg-white font-['Lato','Liberation_Sans',sans-serif]">
      <div className="flex w-[1916px] flex-col">
        <Header />
        <div className="flex h-[899px] shrink-0">
          <Rail />
          <WidgetPanel />
          <Canvas />
          <Settings />
        </div>
        <Footer />
      </div>
      <p className="-mt-px pl-[7px] text-[20px] leading-7 tracking-[0.203px] whitespace-pre text-[#111]">
        {'This image displays the widgets that can be added into each page.  As you can see in this image, the menu widget is being created and edited.  This menu bar allows the user to navigate through the pages of the\nExperience Builder.'}
      </p>
    </div>
  );
}
